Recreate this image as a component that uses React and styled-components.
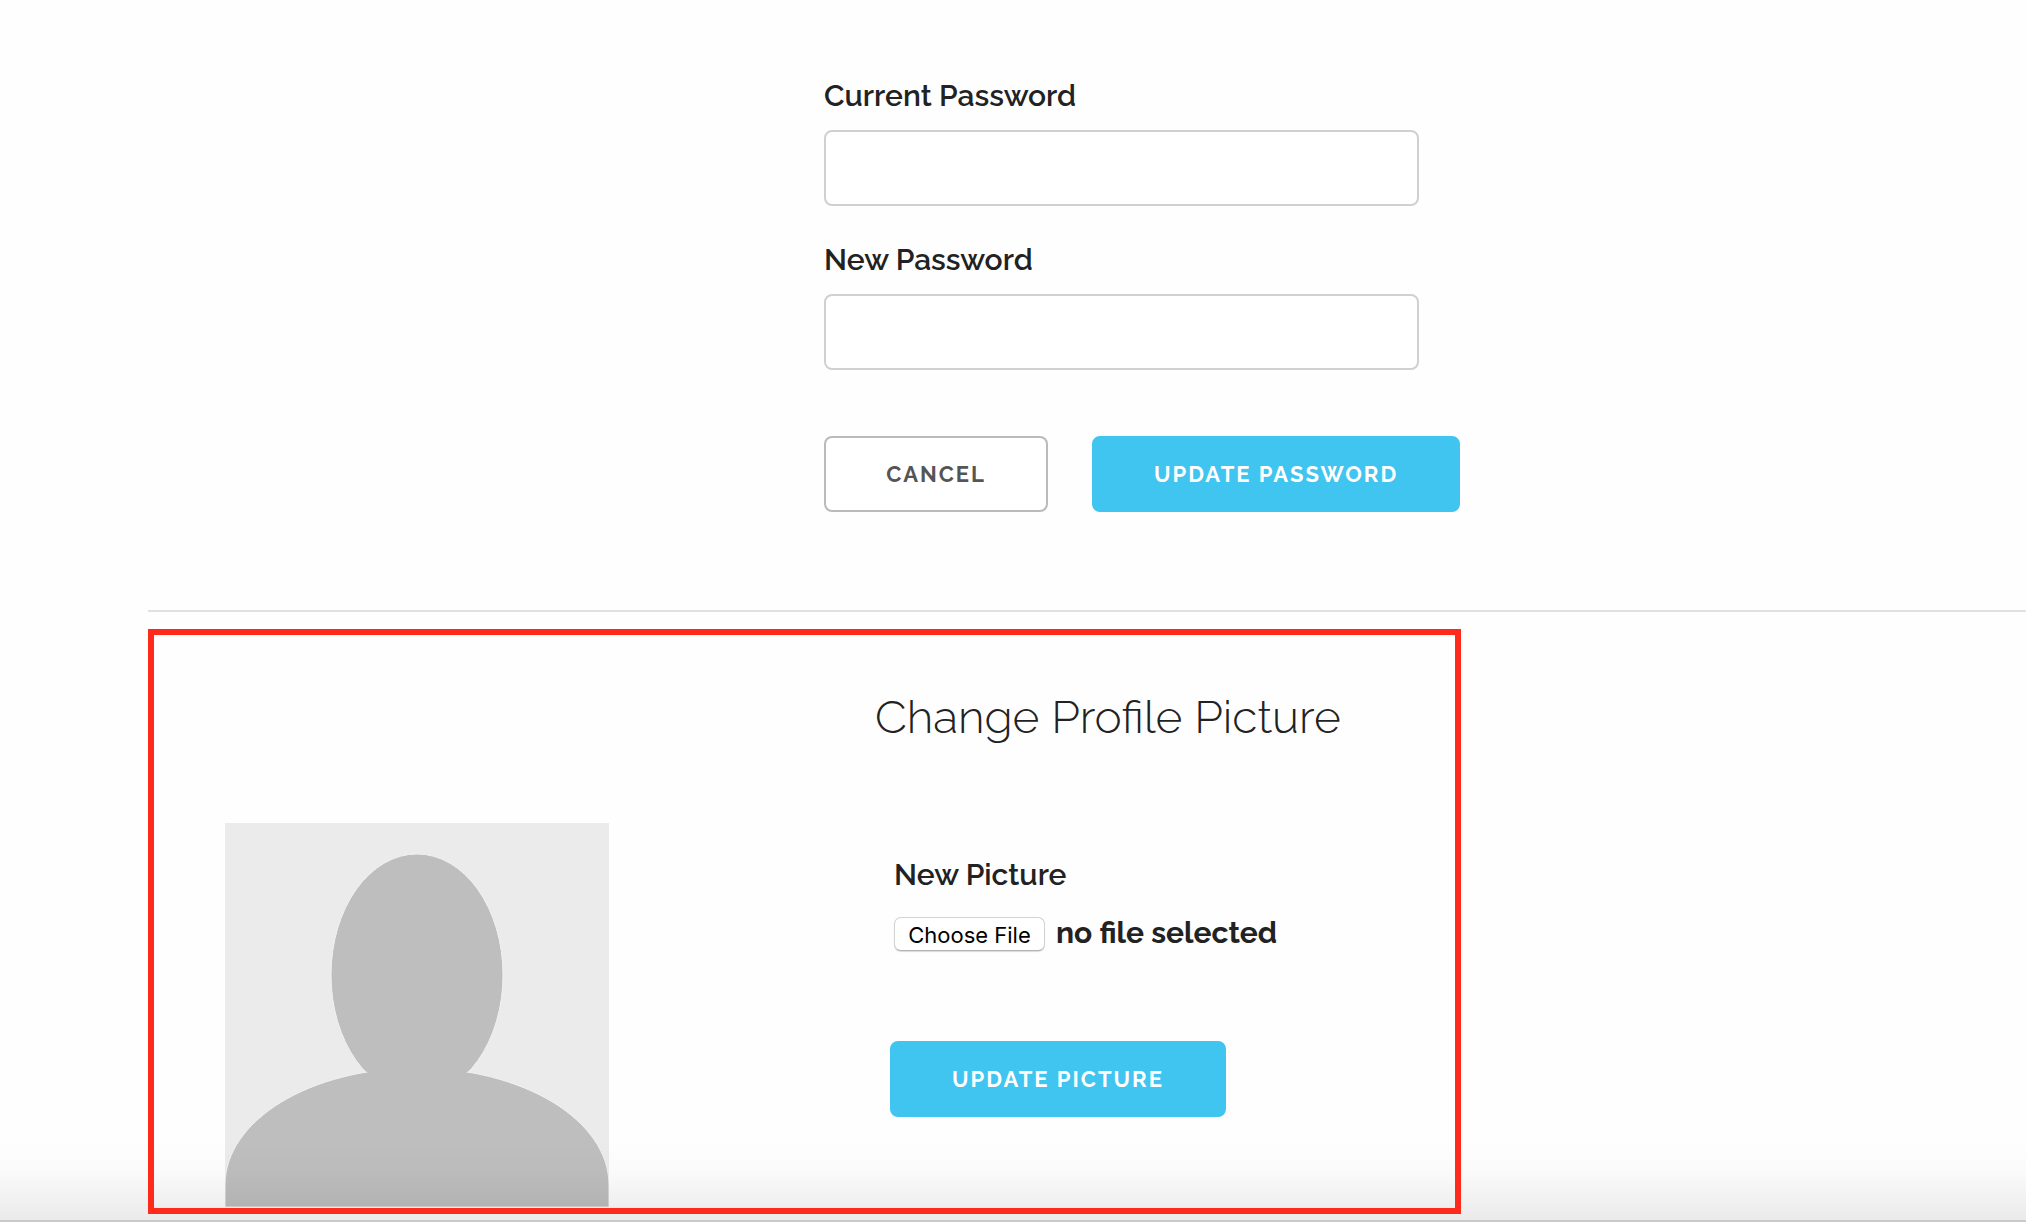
import React, { useState } from "react";
import styled, { createGlobalStyle, css } from "styled-components";

const GlobalStyle = createGlobalStyle`
  *, *::before, *::after { box-sizing: border-box; }
  body {
    margin: 0;
    background: #fefefe;
    color: #222;
    font-family: Raleway, Lato, "Open Sans", sans-serif;
  }
`;

const Page = styled.main`
  position: relative;
  display: flex;
  flex-direction: column;
  min-height: 100vh;
  padding: 78px 0 7px 148px;
  overflow: hidden;
`;

const PasswordForm = styled.form`
  display: flex;
  flex-direction: column;
  align-items: flex-start;
  gap: 36px;
  padding: 0 24px 98px 36%;
  border-bottom: 2px solid #e1e1e1;
`;

const Field = styled.div`
  display: flex;
  flex-direction: column;
  gap: 16px;
  width: 100%;
  max-width: 595px;
`;

const FieldLabel = styled.label`
  font-size: 30px;
  line-height: 36px;
  font-weight: 600;
`;

const PasswordInput = styled.input`
  width: 100%;
  height: 76px;
  padding: 0 20px;
  border: 2px solid #d0d0d0;
  border-radius: 8px;
  background: #fff;
  color: inherit;
  font: inherit;
  font-size: 28px;
`;

const Actions = styled.div`
  display: flex;
  flex-wrap: wrap;
  gap: 44px;
  padding-top: 30px;
`;

const Button = styled.button`
  height: 76px;
  padding: 0;
  width: ${({ $width }) => $width}px;
  border: 2px solid #40c4f0;
  border-radius: 8px;
  background: #40c4f0;
  color: #fff;
  font: 700 22px/28px Raleway, Lato, "Open Sans", sans-serif;
  letter-spacing: 2px;
  text-transform: uppercase;
  cursor: pointer;
  ${({ $outline }) =>
    $outline &&
    css`
      border-color: #bababa;
      background: #fff;
      color: #555;
    `}
`;

const PicturePanel = styled.section`
  position: relative;
  display: grid;
  grid-template-columns: 384px 1fr;
  column-gap: 266px;
  width: 100%;
  max-width: 1313px;
  margin-top: 17px;
  padding: 58px 30px 7px 77px;

  &::after {
    content: "";
    position: absolute;
    inset: 0;
    border: 6px solid #fe2b1d;
    pointer-events: none;
    z-index: 1;
  }
`;

const PanelTitle = styled.h2`
  grid-column: 2;
  margin: 0 0 76px;
  font-size: 46px;
  line-height: 60px;
  font-weight: 300;
  white-space: nowrap;
`;

const Avatar = styled.svg`
  display: block;
  width: 384px;
  height: 384px;
`;

const PictureForm = styled.form`
  display: flex;
  flex-direction: column;
  align-items: flex-start;
  align-self: start;
  gap: 22px;
  padding: 34px 0 0 15px;
`;

const PictureField = styled.div`
  display: flex;
  flex-direction: column;
  gap: 22px;
  padding: 0 0 68px 4px;
`;

const FilePicker = styled.div`
  position: relative;
  display: flex;
  align-items: baseline;
  gap: 11px;
`;

const FileInput = styled.input`
  position: absolute;
  width: 1px;
  height: 1px;
  opacity: 0;
`;

const ChooseFile = styled.label`
  width: 151px;
  height: 34px;
  border: 1px solid #d2d2d2;
  border-bottom-color: #b4b4b4;
  border-radius: 7px;
  background: #fff;
  box-shadow: 0 1px 1px rgba(0, 0, 0, 0.14);
  color: #000;
  font: 400 22px/34px Inter, Roboto, sans-serif;
  text-align: center;
  cursor: pointer;
`;

const FileStatus = styled.span`
  font-size: 30px;
  line-height: 36px;
  font-weight: 700;
`;

const BottomShade = styled.div`
  position: absolute;
  inset: auto 0 0 0;
  height: 82px;
  border-bottom: 2px solid #cacaca;
  background: linear-gradient(
    rgba(0, 0, 0, 0),
    rgba(0, 0, 0, 0.015) 40%,
    rgba(0, 0, 0, 0.08)
  );
  pointer-events: none;
`;

function DefaultAvatar() {
  return (
    <Avatar viewBox="0 0 384 384" role="img" aria-label="Profile picture">
      <rect width="384" height="384" fill="#ebebeb" />
      <g fill="#bebebe" stroke="#f1f1f1" strokeWidth="1">
        <ellipse cx="192" cy="152" rx="86" ry="121" />
        <path d="M0 384V362C0 297 86 245 192 245S384 297 384 362V384Z" />
      </g>
      <ellipse cx="192" cy="152" rx="85" ry="120" fill="#bebebe" />
    </Avatar>
  );
}

export default function App() {
  const [fileName, setFileName] = useState("");
  const stay = (event) => event.preventDefault();

  return (
    <>
      <GlobalStyle />
      <Page>
        <PasswordForm onSubmit={stay}>
          <Field>
            <FieldLabel htmlFor="current-password">Current Password</FieldLabel>
            <PasswordInput id="current-password" type="password" />
          </Field>
          <Field>
            <FieldLabel htmlFor="new-password">New Password</FieldLabel>
            <PasswordInput id="new-password" type="password" />
          </Field>
          <Actions>
            <Button type="reset" $outline $width={224}>Cancel</Button>
            <Button type="submit" $width={368}>Update Password</Button>
          </Actions>
        </PasswordForm>

        <PicturePanel>
          <PanelTitle>Change Profile Picture</PanelTitle>
          <DefaultAvatar />
          <PictureForm onSubmit={stay}>
            <PictureField>
              <FieldLabel htmlFor="new-picture">New Picture</FieldLabel>
              <FilePicker>
                <FileInput
                  id="new-picture"
                  type="file"
                  accept="image/*"
                  onChange={(event) => setFileName(event.target.files[0]?.name ?? "")}
                />
                <ChooseFile htmlFor="new-picture">Choose File</ChooseFile>
                <FileStatus>{fileName || "no file selected"}</FileStatus>
              </FilePicker>
            </PictureField>
            <Button type="submit" $width={336}>Update Picture</Button>
          </PictureForm>
        </PicturePanel>
        <BottomShade />
      </Page>
    </>
  );
}
